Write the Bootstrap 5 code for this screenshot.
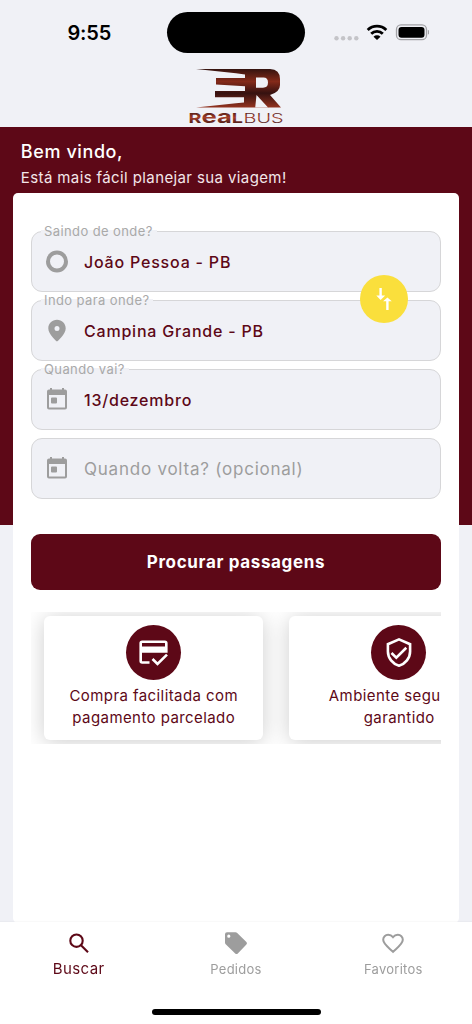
<!DOCTYPE html>
<html lang="pt-BR">
<head>
<meta charset="utf-8">
<meta name="viewport" content="width=device-width, initial-scale=1">
<title>Real Bus</title>
<link href="https://cdn.jsdelivr.net/npm/bootstrap@5.3.0/dist/css/bootstrap.min.css" rel="stylesheet">
<style>
:root{--wine:#5d0817;--mist:#f0f1f6;--line:#d6d6d8;--muted:#9d9d9d}
body{font-family:Inter,"Liberation Sans",sans-serif;background:var(--mist);width:472px;height:1024px;overflow:hidden}
svg{display:block;flex:none}
.statusbar{height:66px}
.clock{font-size:20px;font-weight:600;line-height:24px;letter-spacing:-.2px;width:99.500px;margin-left:67.5px;margin-top:-1px;color:#000}
.island{width:138px;height:41px;border-radius:21px;background:#000;margin-top:-1px}
.brand{height:60.500px}
.hero{height:398px;background:var(--wine);padding:12px 13.300px 0 13.300px}
.hello{font-size:18px;font-weight:550;line-height:26px;letter-spacing:.6px;padding-left:7.500px}
.sub{font-size:15px;line-height:22px;letter-spacing:.39px;padding:2px 0 4px 7.500px;color:#f3e6e9}
.sheet{height:730px;border-radius:5px;padding:38.500px 17.700px 0 17.700px}
.field{height:61px;border:1px solid var(--line);border-radius:11px;background:var(--mist);padding-left:13px;gap:15px}
.field-label{position:absolute;left:9px;top:-11px;height:20px;line-height:20px;padding:0 4px 0 3px;font-size:13px;letter-spacing:.4px;color:#a9a9a9;background:linear-gradient(transparent 10px,var(--mist) 10px)}
.field-label::before{content:"";position:absolute;z-index:-1;left:0;right:0;top:9px;height:2px;background:var(--mist)}
.field-text{font-size:16px;font-weight:500;letter-spacing:.8px;color:var(--wine);padding-top:1px}
.field-text.empty{font-size:17px;font-weight:400;letter-spacing:.77px;color:var(--muted);padding-top:2px}
.swap{position:absolute;right:33px;top:44px;width:48px;height:48px;background:#fadf3c;z-index:3}
.search-btn,.search-btn:hover{height:56px;border-radius:9px;background:var(--wine);color:#fff;font-size:17px;font-weight:650;letter-spacing:.65px;margin-top:35px;padding-top:2px!important}
.perks{height:132px;margin-top:22px;padding:4px 0 0 13px;gap:26px}
.perk{width:219.500px;height:123.500px;border-radius:6px;background:#fff;box-shadow:0 2px 22px rgba(0,0,0,.2);padding-top:9px;flex:none;color:var(--wine);font-size:15px;line-height:22px;letter-spacing:.42px}
.disc{width:55px;height:55px;background:var(--wine);margin-bottom:5px;margin-right:1px}
.tabs{height:102px;background:#fff;z-index:4;box-shadow:0 -1px 1px rgba(0,0,0,.025)}
.tab{width:157.33px;padding-top:9px;color:var(--muted);font-size:13px;letter-spacing:.25px;line-height:20px}
.tab svg{margin-bottom:4px}
.tab.current{color:var(--wine);font-size:15px;letter-spacing:.4px;line-height:19px}
.home-line{position:absolute;left:151.500px;bottom:9px;width:169px;height:6px;border-radius:3px;background:#000}
</style>
</head>
<body>
<div class="statusbar d-flex align-items-center">
  <div class="clock">9:55</div>
  <div class="island"></div>
  <svg width="100" height="24" viewBox="329.500 20.800 100 24" class="ms-4">
    <g fill="#c4c4c8"><circle cx="337" cy="38" r="2.200"/><circle cx="343.600" cy="38" r="2.200"/><circle cx="350.200" cy="38" r="2.200"/><circle cx="356.800" cy="38" r="2.200"/></g>
    <g fill="none" stroke="#000" stroke-width="2.800"><path d="M368.200 29.800a13.300 13.300 0 0 1 18.600 0"/><path d="M371.700 33.600a8.200 8.200 0 0 1 11.600 0"/></g>
    <path d="M374 36.500a5 5 0 0 1 7 0l-3.500 3.300z"/>
    <rect x="397" y="24.700" width="30" height="14.800" rx="4.500" fill="none" stroke="#a2a2a6" stroke-width="1.300"/>
    <rect x="399" y="26.700" width="26" height="10.800" rx="3"/>
    <path d="M428.400 29.700q2 .6 2 2.300t-2 2.300z" fill="#a2a2a6"/>
  </svg>
</div>
<div class="brand d-flex justify-content-center">
  <svg width="112" height="60" viewBox="180 66 112 60">
    <defs><linearGradient id="metal" x1="0" y1="69" x2="0" y2="108" gradientUnits="userSpaceOnUse"><stop offset="0" stop-color="#35130f"/><stop offset=".32" stop-color="#842a19"/><stop offset=".62" stop-color="#351110"/><stop offset="1" stop-color="#963420"/></linearGradient>
    <linearGradient id="metal2" x1="0" y1="112" x2="0" y2="123" gradientUnits="userSpaceOnUse"><stop offset="0" stop-color="#4b1c16"/><stop offset=".5" stop-color="#a33e28"/><stop offset="1" stop-color="#54201a"/></linearGradient></defs>
    <path fill="url(#metal)" fill-rule="evenodd" d="M196 69H270Q280 69.500 280 79V85Q280 92 270 95L281 107.600H196L236 103.200L244 102.500V97.300H215V91H245V86.200L216 84.500V78H245V74.500L236 73.300ZM256 77.500V87.700H263Q268 87.700 268 82.500T263 77.500ZM255.200 107.700H268.300L256.500 95Z"/>
    <text x="188.500" y="122.600" font-size="13.500" font-weight="700" textLength="54.500" lengthAdjust="spacingAndGlyphs" fill="url(#metal2)">R<tspan font-size="17.500">ea</tspan>L</text>
    <text x="243.500" y="122.700" font-size="13.500" font-weight="300" textLength="40" lengthAdjust="spacingAndGlyphs" fill="url(#metal2)">BUS</text>
  </svg>
</div>
<main class="hero text-white">
  <div class="hello">Bem vindo,</div>
  <div class="sub">Está mais fácil planejar sua viagem!</div>
  <section class="sheet bg-white">
    <div class="d-flex flex-column gap-2 position-relative">
      <div class="field d-flex align-items-center position-relative z-1"><span class="field-label">Saindo de onde?</span>
        <svg width="24" height="24" viewBox="0 0 24 24"><circle cx="12" cy="11.500" r="9" fill="none" stroke="#9d9d9d" stroke-width="4"/></svg><span class="field-text">João Pessoa - PB</span></div>
      <div class="field d-flex align-items-center position-relative z-1"><span class="field-label">Indo para onde?</span>
        <svg width="24" height="24" viewBox="0 0 24 24" fill="#9d9d9d"><path fill-rule="evenodd" d="M12 .8C7.100.8 3.300 4.600 3.300 9.400 3.300 15 12 22.600 12 22.600s8.700-7.600 8.700-13.200C20.700 4.600 16.900.8 12 .8Zm0 6.200a2.500 2.500 0 1 1 0 5 2.500 2.500 0 0 1 0-5Z"/></svg><span class="field-text">Campina Grande - PB</span></div>
      <div class="field d-flex align-items-center position-relative z-1"><span class="field-label">Quando vai?</span>
        <svg width="24" height="24" viewBox="0 0 24 24" fill="#9d9d9d"><path fill-rule="evenodd" d="M5 0h2v1.500h10V0h2v1.500h1a2 2 0 0 1 2 2v16a2 2 0 0 1-2 2H4a2 2 0 0 1-2-2v-16a2 2 0 0 1 2-2h1ZM4 7v12.500h16V7Zm3 2.500h4a1 1 0 0 1 1 1v4a1 1 0 0 1-1 1H7a1 1 0 0 1-1-1v-4a1 1 0 0 1 1-1Z"/></svg><span class="field-text">13/dezembro</span></div>
      <div class="field d-flex align-items-center">
        <svg width="24" height="24" viewBox="0 0 24 24" fill="#9d9d9d"><path fill-rule="evenodd" d="M5 0h2v1.500h10V0h2v1.500h1a2 2 0 0 1 2 2v16a2 2 0 0 1-2 2H4a2 2 0 0 1-2-2v-16a2 2 0 0 1 2-2h1ZM4 7v12.500h16V7Zm3 2.500h4a1 1 0 0 1 1 1v4a1 1 0 0 1-1 1H7a1 1 0 0 1-1-1v-4a1 1 0 0 1 1-1Z"/></svg><span class="field-text empty">Quando volta? (opcional)</span></div>
      <button class="swap btn p-0 border-0 rounded-circle d-flex align-items-center justify-content-center" aria-label="Inverter"><svg width="24" height="24" viewBox="0 0 24 24" fill="#fff"><path d="M7.400 1h2.400v7.500h3.400L8.600 13 4.300 8.500h3.100Z"/><path d="M14.200 23h2.400v-8.700h3.200L15.400 10.500 11.100 14.300h3.100Z"/></svg></button>
    </div>
    <button class="search-btn btn border-0 w-100 p-0">Procurar passagens</button>
    <div class="perks d-flex overflow-hidden">
      <article class="perk d-flex flex-column align-items-center text-center">
        <div class="disc rounded-circle d-flex align-items-center justify-content-center"><svg width="32" height="32" viewBox="0 0 32 32" fill="none" stroke="#fff" stroke-width="2.600"><path d="M12.500 25.500H5.200A1.500 1.500 0 0 1 3.700 24V6.300a1.500 1.500 0 0 1 1.500-1.500h22.600a1.500 1.500 0 0 1 1.500 1.500v8.200H4"/><path d="M4 12h25.300" stroke-width="5"/><path d="m15.500 22 5 5L30 17.600"/></svg></div>
        <div>Compra facilitada com<br>pagamento parcelado</div>
      </article>
      <article class="perk d-flex flex-column align-items-center text-center">
        <div class="disc rounded-circle d-flex align-items-center justify-content-center"><svg width="32" height="32" viewBox="0 0 32 32" fill="none" stroke="#fff" stroke-width="2.600"><path d="M16 2.400 4.900 7.200V14.500c0 6.500 4.700 12.300 11.100 14.200C22.400 26.800 27.100 21 27.100 14.500V7.200Z"/><path d="m8.500 16 4.800 4.600L23.300 10.800"/></svg></div>
        <div class="text-nowrap">Ambiente seguro e<br>garantido</div>
      </article>
    </div>
  </section>
</main>
<nav class="tabs fixed-bottom d-flex">
  <a class="tab current d-flex flex-column align-items-center text-decoration-none"><svg width="24" height="24" viewBox="0 0 24 24" fill="none" stroke="currentColor" stroke-width="2.100"><circle cx="9.500" cy="9.700" r="6.200"/><path d="m14 14.200 7 7"/></svg>Buscar</a>
  <a class="tab d-flex flex-column align-items-center text-decoration-none"><svg width="24" height="24" viewBox="0 0 24 24" fill="currentColor"><path fill-rule="evenodd" d="M3 1.300h8.500q1 0 1.700.7l9.200 9q1.200 1.300 0 2.600l-8.600 8.900q-1.300 1.200-2.600 0L1.700 13.300Q1 12.600 1 11.600V3.300q0-2 2-2Zm1.800 2.300a1.600 1.600 0 1 0 0 3.200 1.600 1.600 0 0 0 0-3.200Z"/></svg>Pedidos</a>
  <a class="tab d-flex flex-column align-items-center text-decoration-none"><svg width="24" height="24" viewBox="0 0 24 24" fill="none" stroke="currentColor" stroke-width="2"><path d="m12 20.800-1.200-1.100C6 15.300 2.200 12.500 2.200 8.800a4.900 4.900 0 0 1 5-5c1.800 0 3.600.9 4.800 2.400 1.200-1.500 3-2.400 4.800-2.400a4.900 4.900 0 0 1 5 5c0 3.700-3.800 6.500-8.600 10.900Z"/></svg>Favoritos</a>
  <div class="home-line"></div>
</nav>
</body>
</html>
